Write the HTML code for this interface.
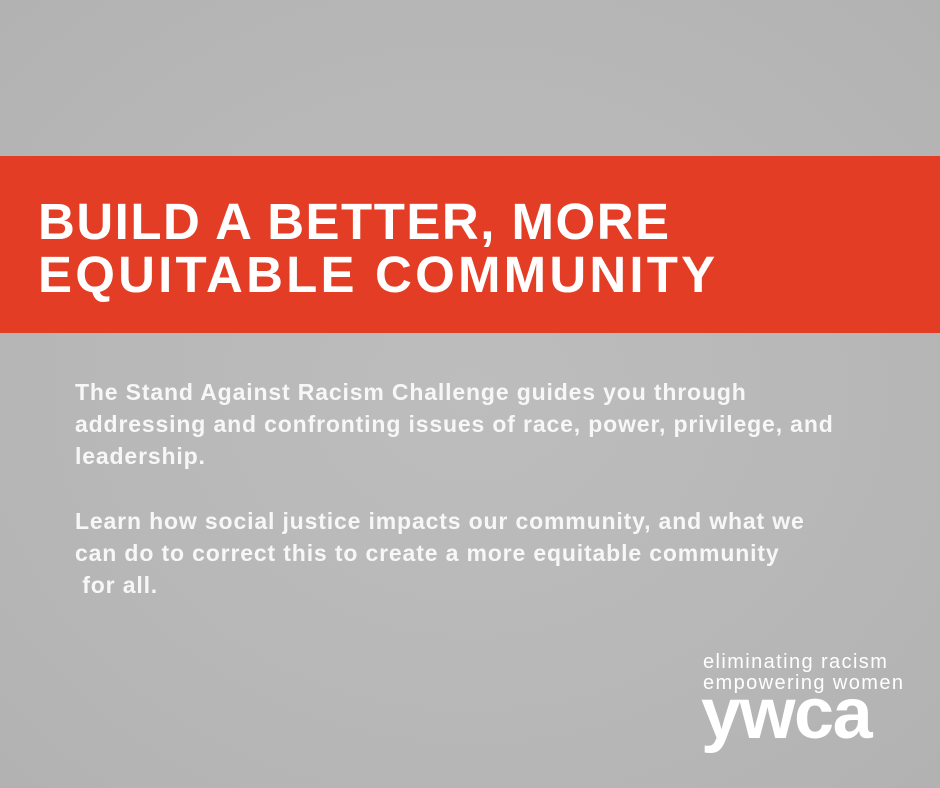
<!DOCTYPE html>
<html><head><meta charset="utf-8"><style>
html,body{margin:0;padding:0}
body{width:940px;height:788px;overflow:hidden;position:relative;background:radial-gradient(ellipse at 50% 50%,#bdbdbd 0%,#b7b7b7 60%,#b2b2b2 100%);font-family:"Liberation Sans",sans-serif}
.band{position:absolute;left:0;top:156px;width:940px;height:177px;background:#e43d26}
.h{position:absolute;left:38px;color:#fff;font-weight:bold;font-size:51px;letter-spacing:1.5px;white-space:nowrap;line-height:1}
.p{position:absolute;left:75px;color:#f7f7f7;font-weight:bold;font-size:23px;white-space:nowrap;line-height:1;letter-spacing:0.85px}
.t{position:absolute;color:#fff;white-space:nowrap;line-height:1}
</style></head><body>
<div class="band"></div>
<div class="h" style="top:196px">BUILD A BETTER, MORE</div>
<div class="h" style="top:249px;letter-spacing:3.2px">EQUITABLE COMMUNITY</div>
<div class="p" style="top:381px">The Stand Against Racism Challenge guides you through</div>
<div class="p" style="top:413px">addressing and confronting issues of race, power, privilege, and</div>
<div class="p" style="top:445px">leadership.</div>
<div class="p" style="top:510px">Learn how social justice impacts our community, and what we</div>
<div class="p" style="top:542px">can do to correct this to create a more equitable community</div>
<div class="p" style="top:574px">&nbsp;for all.</div>
<div class="t" style="left:703px;top:652px;font-size:20px;letter-spacing:1.4px">eliminating racism</div>
<div class="t" style="left:703px;top:673px;font-size:20px;letter-spacing:1.4px">empowering women</div>
<div class="t" style="left:701px;top:678px;font-size:72px;font-weight:bold;letter-spacing:-1.5px">ywca</div>
</body></html>
